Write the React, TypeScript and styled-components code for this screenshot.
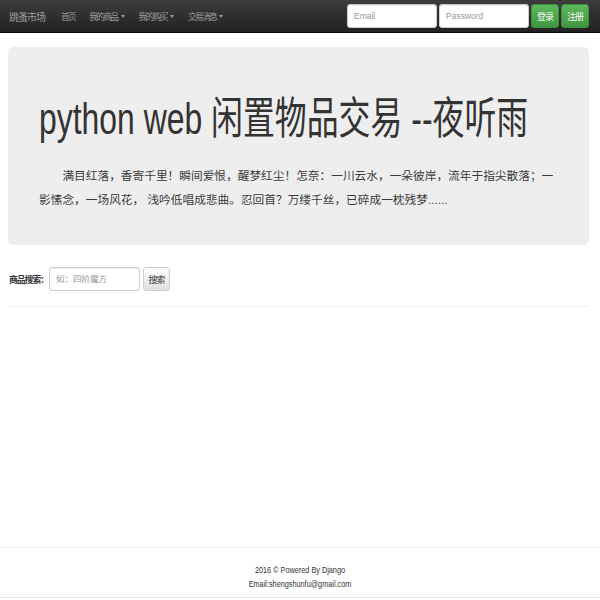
import React from "react";
import styled, { createGlobalStyle } from "styled-components";

const Global = createGlobalStyle`
  html, body { margin: 0; padding: 0; background: #fff; }
  body {
    font-family: "Liberation Sans", "Noto Sans CJK SC", sans-serif;
    color: #333;
  }
  * { box-sizing: border-box; }
`;

const Page = styled.div`
  min-height: 100vh;
  display: flex;
  flex-direction: column;
`;

const NavBar = styled.nav`
  height: 33px;
  display: flex;
  align-items: center;
  padding: 0 11px 0 9px;
  background: linear-gradient(to bottom, #3c3c3c 0%, #222 100%);
  border-bottom: 1px solid #080808;
`;

const Brand = styled.a`
  color: #9d9d9d;
  font-size: 10px;
  letter-spacing: -1px;
  margin-right: 16px;
  white-space: nowrap;
`;

const NavList = styled.div`
  display: flex;
  align-items: center;
  gap: 14px;
`;

const NavLink = styled.a`
  color: #9d9d9d;
  font-size: 8.6px;
  letter-spacing: -1.5px;
  display: flex;
  align-items: center;
  white-space: nowrap;
`;

const Caret = styled.span`
  display: inline-block;
  width: 0;
  height: 0;
  margin-left: 3px;
  border-top: 3px solid #9d9d9d;
  border-left: 2.5px solid transparent;
  border-right: 2.5px solid transparent;
`;

const LoginForm = styled.form`
  margin-left: auto;
  display: flex;
  align-items: center;
  gap: 2px;
`;

const TextInput = styled.input<{ $w: number }>`
  width: ${(p) => p.$w}px;
  height: 24px;
  border: 1px solid #ccc;
  border-radius: 3px;
  background: #fff;
  padding: 0 6px;
  font-family: "Liberation Sans", "Noto Sans CJK SC", sans-serif;
  font-size: 8.5px;
  color: #555;
  outline: none;
  box-shadow: inset 0 1px 1px rgba(0, 0, 0, 0.075);
  &::placeholder { color: #999; }
`;

const GreenButton = styled.button`
  width: 28px;
  height: 24px;
  padding: 0;
  border: 1px solid #3e8f3e;
  border-radius: 3px;
  background: linear-gradient(to bottom, #5cb85c 0%, #419641 100%);
  color: #fff;
  font-family: "Liberation Sans", "Noto Sans CJK SC", sans-serif;
  font-size: 9px;
  letter-spacing: -1px;
  flex-shrink: 0;
`;

const Main = styled.main`
  flex: 1;
  padding: 14px 11px 0 8px;
`;

const Jumbotron = styled.section`
  background: #eee;
  border-radius: 5px;
  padding: 48px 24px 33px 31px;
`;

const Title = styled.h1`
  margin: 0;
  font-size: 44px;
  line-height: 48px;
  font-weight: 400;
  color: #333;
  white-space: nowrap;
  transform: scaleX(0.725);
  transform-origin: left center;
`;

const Lead = styled.p`
  margin: 21px 0 0;
  max-width: 518px;
  font-size: 11.7px;
  line-height: 24px;
  text-indent: 2em;
  color: #3a3a3a;
`;

const SearchRow = styled.form`
  display: flex;
  align-items: center;
  margin: 22px 0 0 1px;
  gap: 3px;
`;

const SearchLabel = styled.label`
  font-size: 8.8px;
  font-weight: 700;
  letter-spacing: -1px;
  color: #333;
  margin-right: -2px;
  white-space: nowrap;
`;

const GrayButton = styled.button`
  width: 27px;
  height: 24px;
  padding: 0;
  border: 1px solid #ccc;
  border-radius: 3px;
  background: linear-gradient(to bottom, #fff 0%, #e0e0e0 100%);
  color: #333;
  font-family: "Liberation Sans", "Noto Sans CJK SC", sans-serif;
  font-size: 9px;
  letter-spacing: -1px;
`;

const Rule = styled.hr`
  margin: 15px 0 0;
  border: 0;
  border-top: 1px solid #eee;
`;

const Footer = styled.footer`
  border-top: 1px solid #eee;
  border-bottom: 1px solid #e5e5e5;
  margin-bottom: 2px;
  padding: 15px 0 6px;
  text-align: center;
`;

const FooterLine = styled.div`
  font-size: 9.6px;
  line-height: 14px;
  color: #333;
  transform: scaleX(0.76);
  transform-origin: center;
`;

export default function App() {
  return (
    <Page>
      <Global />
      <NavBar>
        <Brand>跳蚤市场</Brand>
        <NavList>
          <NavLink>首页</NavLink>
          <NavLink>
            我的商品<Caret />
          </NavLink>
          <NavLink>
            我的购买<Caret />
          </NavLink>
          <NavLink>
            交易消息<Caret />
          </NavLink>
        </NavList>
        <LoginForm onSubmit={(e) => e.preventDefault()}>
          <TextInput $w={90} placeholder="Email" />
          <TextInput $w={90} placeholder="Password" type="password" />
          <GreenButton type="button">登录</GreenButton>
          <GreenButton type="button">注册</GreenButton>
        </LoginForm>
      </NavBar>
      <Main>
        <Jumbotron>
          <Title>python web 闲置物品交易 --夜听雨</Title>
          <Lead>
            满目红落，香寄千里！瞬间爱恨，醒梦红尘！怎奈：一川云水，一朵彼岸，流年于指尖散落；一影愫念，一场风花，
            浅吟低唱成悲曲。忍回首？万缕千丝，已碎成一枕残梦......
          </Lead>
        </Jumbotron>
        <SearchRow onSubmit={(e) => e.preventDefault()}>
          <SearchLabel>商品搜索：</SearchLabel>
          <TextInput $w={91} placeholder="如：四阶魔方" />
          <GrayButton type="button">搜索</GrayButton>
        </SearchRow>
        <Rule />
      </Main>
      <Footer>
        <FooterLine>2016 © Powered By Django</FooterLine>
        <FooterLine>Email:shengshunfu@gmail.com</FooterLine>
      </Footer>
    </Page>
  );
}
